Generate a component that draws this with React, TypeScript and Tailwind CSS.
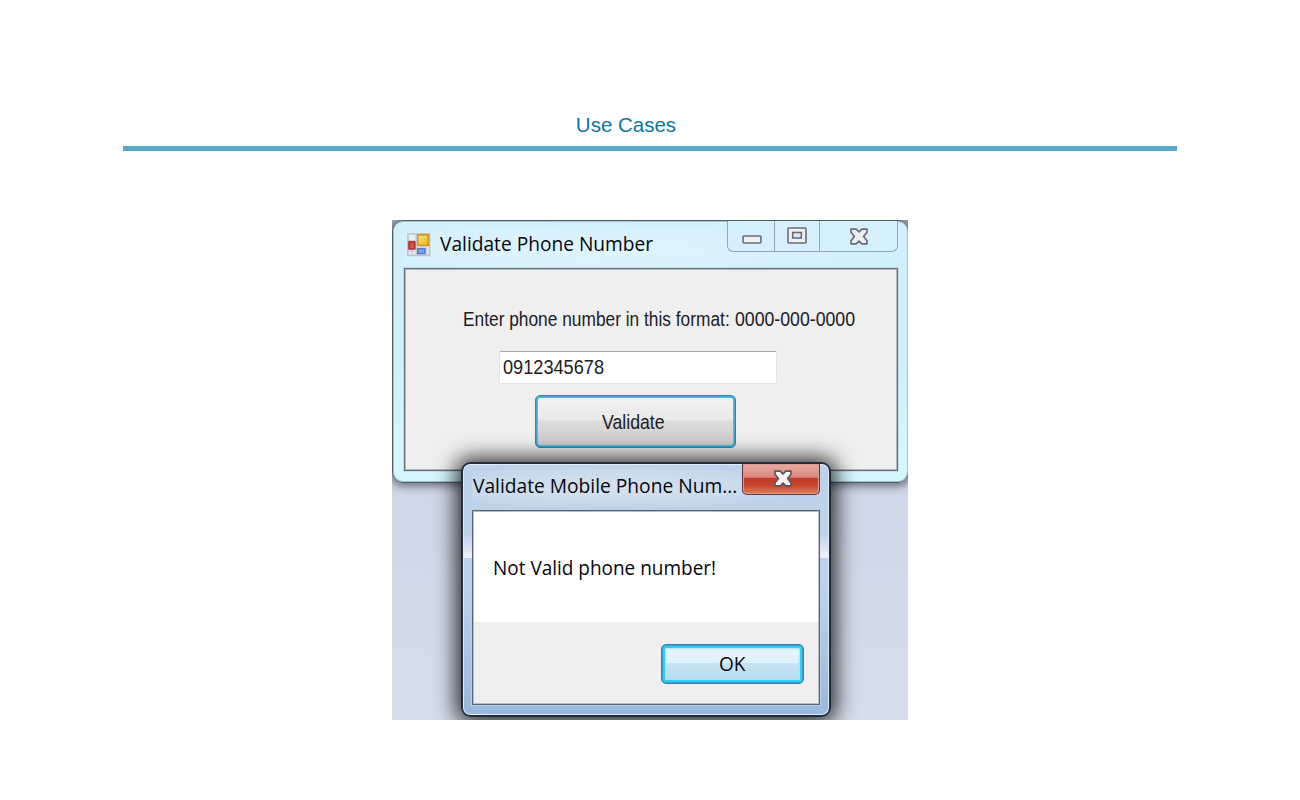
import { useLayoutEffect, useRef } from "react";

function FitText({ text, width, className }: { text: string; width: number; className: string }) {
  const box = useRef<HTMLSpanElement>(null);
  useLayoutEffect(() => {
    const el = box.current;
    if (el) el.style.transform = `scaleX(${width / el.offsetWidth})`;
  }, [text, width]);
  return (
    <span className="block" style={{ width }}>
      <span ref={box} className={`inline-block origin-left whitespace-nowrap ${className}`}>
        {text}
      </span>
    </span>
  );
}

const segoe = "font-['Open_Sans',sans-serif] text-[20.5px] leading-[28px] text-[#06060e]";
const sans = "font-['Liberation_Sans',sans-serif] text-[20.5px] leading-[24px] text-[#202024]";

function FormIcon() {
  return (
    <svg width="24" height="24" viewBox="0 0 24 24">
      <defs>
        <linearGradient id="gold" x1="0" y1="0" x2="1" y2="1">
          <stop offset="0" stopColor="#ffe98a" />
          <stop offset="1" stopColor="#f0b010" />
        </linearGradient>
      </defs>
      <rect x="0.9" y="0.9" width="21.8" height="21.6" fill="#e4edf1" stroke="#c2c2c2" strokeWidth="1.6" />
      <path d="M1 7.5H10M9.2 1V22M5 17V22M19.5 14V22M1 18H10" stroke="#c8cccf" strokeWidth="1.2" />
      <rect x="10.7" y="1.9" width="10.6" height="10.6" fill="url(#gold)" stroke="#c8962e" strokeWidth="1.6" />
      <rect x="2" y="8.9" width="5.8" height="7" fill="#d85249" stroke="#ad2f29" strokeWidth="1.6" />
      <rect x="10.6" y="15.6" width="7.4" height="5" fill="#78a7f4" stroke="#537bd6" strokeWidth="1.5" />
    </svg>
  );
}

function CloseGlyph({ fill, stroke }: { fill: string; stroke: string }) {
  return (
    <svg width="20" height="18" viewBox="0 0 20 18">
      <path
        d="M2 1.2H7.3L10 4L12.7 1.2H18V4.2L14.6 8.5L18 12.8V15.8H12.7L10 13L7.3 15.8H2V12.8L5.4 8.5L2 4.2Z"
        fill={fill}
        stroke={stroke}
        strokeWidth="1.7"
        strokeLinejoin="round"
      />
    </svg>
  );
}

function MainWindow() {
  return (
    <section className="absolute left-0 top-0 flex h-[263px] w-[517px] flex-col rounded-[11px] border border-[#4f5b63] bg-linear-to-b from-[#d3effc] via-[#d0effc] to-[#d6f7ff] pr-[11px] pb-[11px] pl-[11px] shadow-[inset_0_0_0_1px_#a8c4d0,0_1px_9px_2px_rgba(50,55,65,0.65)]">
      <header className="flex h-[47px] shrink-0 items-start justify-between bg-[radial-gradient(ellipse_at_38%_60%,#e0f5fe_0%,#d9f2fd_40%,transparent_72%)]">
        <div className="flex pl-[3px]">
          <div className="pt-[12px]">
            <FormIcon />
          </div>
          <div className="pt-[8px] pl-[9px]">
            <FitText text="Validate Phone Number" width={213} className={segoe} />
          </div>
        </div>
        <div className="mr-[-1px] flex h-[31px] w-[171px] rounded-b-[6px] border border-t-0 border-[#92a7b2] bg-[#d6f0fb]">
          <div className="flex w-[47px] items-start justify-center border-r border-[#92a7b2] pt-[14px] pl-[2px]">
            <svg width="20" height="9" viewBox="0 0 20 9">
              <rect x="1" y="1" width="18" height="7" rx="1" fill="#f1eff0" stroke="#6b6a7b" strokeWidth="1.6" />
            </svg>
          </div>
          <div className="flex w-[45px] items-start justify-center border-r border-[#92a7b2] pt-[6px]">
            <svg width="20" height="17" viewBox="0 0 20 17">
              <rect x="1" y="1" width="18" height="15" rx="1" fill="#f1eff0" stroke="#6b6a7b" strokeWidth="1.6" />
              <rect x="5.7" y="5.5" width="8.6" height="5.5" fill="#d7edf7" stroke="#6b6a7b" strokeWidth="1.6" />
            </svg>
          </div>
          <div className="flex flex-1 items-start justify-center pt-[7px]">
            <CloseGlyph fill="#eeeced" stroke="#6b6a7b" />
          </div>
        </div>
      </header>
      <div className="flex w-[494px] flex-1 flex-col border border-[#65717a] bg-[#efefef] shadow-[0_0_0_1px_#c7dbe2,inset_0_0_0_1px_#b4b8ba]">
        <div className="flex pt-[38px] pl-[58px]">
          <FitText text="Enter phone number in this format: " width={267} className={sans} />
          <div className="pl-[5px]">
            <FitText text="0000-000-0000" width={120} className={sans} />
          </div>
        </div>
        <div className="mt-[19px] ml-[94px] flex h-[33px] w-[278px] items-center rounded-[2px] border border-[#e0e3ea] border-t-[#a8aab2] bg-white pb-px pl-[3px]">
          <FitText text="0912345678" width={101} className={sans} />
        </div>
        <button className="mt-[11px] ml-[130px] flex h-[53px] w-[201px] items-center justify-center rounded-[5px] border border-[#3b82ad] bg-[linear-gradient(#f3f3f3_0%,#e9e9e9_47%,#dcdcdc_49%,#cbcbcb_100%)] pt-px pr-[4px] shadow-[inset_0_0_0_1px_#3fa6d2,inset_0_0_0_2px_#44c4ea]">
          <FitText text="Validate" width={63} className={sans} />
        </button>
      </div>
    </section>
  );
}

function MessageDialog() {
  return (
    <section className="absolute left-[69px] top-[242px] flex h-[255px] w-[370px] flex-col rounded-[9px] border-2 border-[#252c36] bg-linear-to-b from-[#bdd2ea] via-[#bcd2ec] to-[#98b8de] px-[9px] pb-[10px] shadow-[inset_0_0_0_1px_#e2ecf7,0_1px_21px_5px_rgba(0,0,0,0.82)]">
      <div className="absolute left-[1px] top-[70px] h-[24px] w-[8px] bg-linear-to-b from-transparent to-[#edf3fa]" />
      <div className="absolute right-[1px] top-[70px] h-[24px] w-[8px] bg-linear-to-b from-transparent to-[#edf3fa]" />
      <header className="flex h-[46px] shrink-0 items-start justify-between bg-[radial-gradient(ellipse_at_40%_50%,#d7e3ee_0%,#cadbeb_45%,transparent_70%)]">
        <div className="pt-[7px] pl-[1px]">
          <FitText text="Validate Mobile Phone Num..." width={264} className={segoe} />
        </div>
        <div className="flex h-[31px] w-[78px] items-start justify-center rounded-b-[5px] border border-t-0 border-[#65333a] bg-[linear-gradient(#e8aaa2_0%,#d98a80_44%,#bf3b26_48%,#c4452e_70%,#dd8060_100%)] pt-[6px] pl-[3px] shadow-[inset_0_0_0_1px_#d99a90]">
          <CloseGlyph fill="#f5f5f5" stroke="#5c5660" />
        </div>
      </header>
      <div className="flex flex-1 flex-col border border-[#59667a] bg-[#efefef] shadow-[0_0_0_1px_#c0cfe0,inset_0_0_0_1px_#b8bdc4]">
        <div className="mx-px mt-px h-[110px] bg-white pt-[41px] pl-[19px]">
          <FitText text="Not Valid phone number!" width={223} className={segoe} />
        </div>
        <div className="flex flex-1 justify-end pt-[22px] pr-[15px]">
          <button className="flex h-[40px] w-[143px] items-center justify-center rounded-[5px] border border-[#3b82b5] bg-[linear-gradient(#eaf6fd_0%,#dff2fc_46%,#c6e4f4_48%,#b6daed_100%)] pb-[3px] shadow-[inset_0_0_0_1px_#369fd2,inset_0_0_0_3px_#35cdf7,inset_0_0_2px_4px_#a5e4f8]">
            <FitText text="OK" width={27} className={segoe} />
          </button>
        </div>
      </div>
    </section>
  );
}

export default function App() {
  return (
    <main className="flex h-[800px] w-[1300px] flex-col items-center overflow-hidden bg-white">
      <h1 className="mt-[110px] mr-[48px] font-['Liberation_Sans',sans-serif] text-[20.5px] leading-[30px] text-[#0a76a4]">
        Use Cases
      </h1>
      <div className="mt-[6px] h-[5px] w-[1054px] shrink-0 bg-[#5aa6c8]" />
      <div className="relative mt-[69px] h-[500px] w-[516px] shrink-0 overflow-hidden bg-linear-to-b from-[#aeb8c4] via-[#cfd8e8] via-55% to-[#d5deed]">
        <MainWindow />
        <MessageDialog />
      </div>
    </main>
  );
}
